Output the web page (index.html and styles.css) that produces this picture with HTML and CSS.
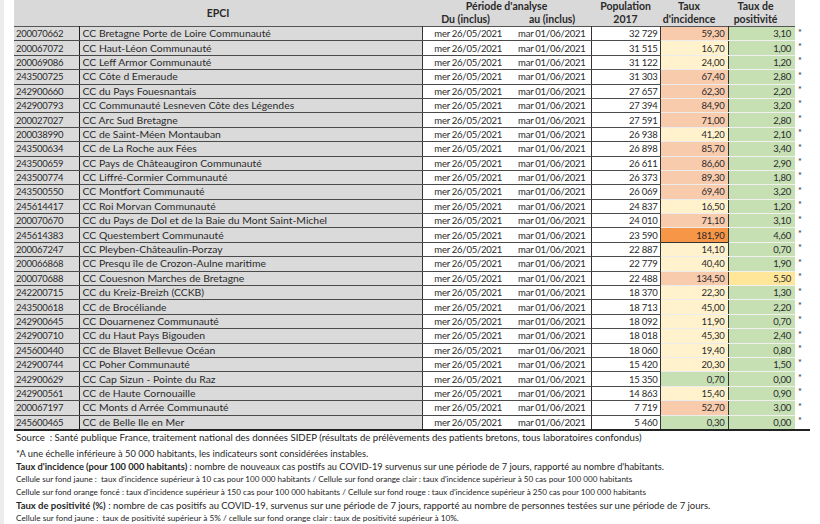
FILE: index.html
```html
<!DOCTYPE html>
<html lang="fr">
<head>
<meta charset="utf-8">
<title>EPCI - taux d'incidence</title>
<link rel="stylesheet" href="styles.css">
</head>
<body>
<div class="page">
<table class="grid">
<colgroup>
<col class="c-id"><col class="c-name"><col class="c-du"><col class="c-au"><col class="c-pop"><col class="c-inc"><col class="c-pos"><col class="c-star">
</colgroup>
<thead>
<tr class="h1">
<th colspan="2" rowspan="2" class="h-epci">EPCI</th>
<th colspan="2" class="h-per">Période d'analyse</th>
<th rowspan="2" class="h-two">Population<br>2017</th>
<th rowspan="2" class="h-two h-inc">Taux<br>d'incidence</th>
<th rowspan="2" class="h-two h-pos">Taux de<br>positivité</th>
<th rowspan="2" class="h-star"></th>
</tr>
<tr class="h2">
<th class="h-du">Du (inclus)</th>
<th class="h-au">au (inclus)</th>
</tr>
</thead>
<tbody>
<tr class="first"><td class="id">200070662</td><td class="nm">CC Bretagne Porte de Loire Communauté</td><td class="du">mer 26/05/2021</td><td class="au">mar 01/06/2021</td><td class="pop">32 729</td><td class="inc o">59,30</td><td class="pos g">3,10</td><td class="st">*</td></tr>
<tr><td class="id">200067072</td><td class="nm">CC Haut-Léon Communauté</td><td class="du">mer 26/05/2021</td><td class="au">mar 01/06/2021</td><td class="pop">31 515</td><td class="inc y">16,70</td><td class="pos g">1,00</td><td class="st">*</td></tr>
<tr><td class="id">200069086</td><td class="nm">CC Leff Armor Communauté</td><td class="du">mer 26/05/2021</td><td class="au">mar 01/06/2021</td><td class="pop">31 122</td><td class="inc y">24,00</td><td class="pos g">1,20</td><td class="st">*</td></tr>
<tr><td class="id">243500725</td><td class="nm">CC Côte d Emeraude</td><td class="du">mer 26/05/2021</td><td class="au">mar 01/06/2021</td><td class="pop">31 303</td><td class="inc o">67,40</td><td class="pos g">2,80</td><td class="st">*</td></tr>
<tr><td class="id">242900660</td><td class="nm">CC du Pays Fouesnantais</td><td class="du">mer 26/05/2021</td><td class="au">mar 01/06/2021</td><td class="pop">27 657</td><td class="inc o">62,30</td><td class="pos g">2,20</td><td class="st">*</td></tr>
<tr><td class="id">242900793</td><td class="nm">CC Communauté Lesneven Côte des Légendes</td><td class="du">mer 26/05/2021</td><td class="au">mar 01/06/2021</td><td class="pop">27 394</td><td class="inc o">84,90</td><td class="pos g">3,20</td><td class="st">*</td></tr>
<tr><td class="id">200027027</td><td class="nm">CC Arc Sud Bretagne</td><td class="du">mer 26/05/2021</td><td class="au">mar 01/06/2021</td><td class="pop">27 591</td><td class="inc o">71,00</td><td class="pos g">2,80</td><td class="st">*</td></tr>
<tr><td class="id">200038990</td><td class="nm">CC de Saint-Méen Montauban</td><td class="du">mer 26/05/2021</td><td class="au">mar 01/06/2021</td><td class="pop">26 938</td><td class="inc y">41,20</td><td class="pos g">2,10</td><td class="st">*</td></tr>
<tr><td class="id">243500634</td><td class="nm">CC de La Roche aux Fées</td><td class="du">mer 26/05/2021</td><td class="au">mar 01/06/2021</td><td class="pop">26 898</td><td class="inc o">85,70</td><td class="pos g">3,40</td><td class="st">*</td></tr>
<tr><td class="id">243500659</td><td class="nm">CC Pays de Châteaugiron Communauté</td><td class="du">mer 26/05/2021</td><td class="au">mar 01/06/2021</td><td class="pop">26 611</td><td class="inc o">86,60</td><td class="pos g">2,90</td><td class="st">*</td></tr>
<tr><td class="id">243500774</td><td class="nm">CC Liffré-Cormier Communauté</td><td class="du">mer 26/05/2021</td><td class="au">mar 01/06/2021</td><td class="pop">26 373</td><td class="inc o">89,30</td><td class="pos g">1,80</td><td class="st">*</td></tr>
<tr><td class="id">243500550</td><td class="nm">CC Montfort Communauté</td><td class="du">mer 26/05/2021</td><td class="au">mar 01/06/2021</td><td class="pop">26 069</td><td class="inc o">69,40</td><td class="pos g">3,20</td><td class="st">*</td></tr>
<tr><td class="id">245614417</td><td class="nm">CC Roi Morvan Communauté</td><td class="du">mer 26/05/2021</td><td class="au">mar 01/06/2021</td><td class="pop">24 837</td><td class="inc y">16,50</td><td class="pos g">1,20</td><td class="st">*</td></tr>
<tr><td class="id">200070670</td><td class="nm">CC du Pays de Dol et de la Baie du Mont Saint-Michel</td><td class="du">mer 26/05/2021</td><td class="au">mar 01/06/2021</td><td class="pop">24 010</td><td class="inc o">71,10</td><td class="pos g">3,10</td><td class="st">*</td></tr>
<tr><td class="id">245614383</td><td class="nm">CC Questembert Communauté</td><td class="du">mer 26/05/2021</td><td class="au">mar 01/06/2021</td><td class="pop">23 590</td><td class="inc r">181,90</td><td class="pos g">4,60</td><td class="st">*</td></tr>
<tr><td class="id">200067247</td><td class="nm">CC Pleyben-Châteaulin-Porzay</td><td class="du">mer 26/05/2021</td><td class="au">mar 01/06/2021</td><td class="pop">22 887</td><td class="inc y">14,10</td><td class="pos g">0,70</td><td class="st">*</td></tr>
<tr><td class="id">200066868</td><td class="nm">CC Presqu île de Crozon-Aulne maritime</td><td class="du">mer 26/05/2021</td><td class="au">mar 01/06/2021</td><td class="pop">22 779</td><td class="inc y">40,40</td><td class="pos g">1,90</td><td class="st">*</td></tr>
<tr><td class="id">200070688</td><td class="nm">CC Couesnon Marches de Bretagne</td><td class="du">mer 26/05/2021</td><td class="au">mar 01/06/2021</td><td class="pop">22 488</td><td class="inc o">134,50</td><td class="pos y">5,50</td><td class="st">*</td></tr>
<tr><td class="id">242200715</td><td class="nm">CC du Kreiz-Breizh (CCKB)</td><td class="du">mer 26/05/2021</td><td class="au">mar 01/06/2021</td><td class="pop">18 370</td><td class="inc y">22,30</td><td class="pos g">1,30</td><td class="st">*</td></tr>
<tr><td class="id">243500618</td><td class="nm">CC de Brocéliande</td><td class="du">mer 26/05/2021</td><td class="au">mar 01/06/2021</td><td class="pop">18 713</td><td class="inc y">45,00</td><td class="pos g">2,20</td><td class="st">*</td></tr>
<tr><td class="id">242900645</td><td class="nm">CC Douarnenez Communauté</td><td class="du">mer 26/05/2021</td><td class="au">mar 01/06/2021</td><td class="pop">18 092</td><td class="inc y">11,90</td><td class="pos g">0,70</td><td class="st">*</td></tr>
<tr><td class="id">242900710</td><td class="nm">CC du Haut Pays Bigouden</td><td class="du">mer 26/05/2021</td><td class="au">mar 01/06/2021</td><td class="pop">18 018</td><td class="inc y">45,30</td><td class="pos g">2,40</td><td class="st">*</td></tr>
<tr><td class="id">245600440</td><td class="nm">CC de Blavet Bellevue Océan</td><td class="du">mer 26/05/2021</td><td class="au">mar 01/06/2021</td><td class="pop">18 060</td><td class="inc y">19,40</td><td class="pos g">0,80</td><td class="st">*</td></tr>
<tr><td class="id">242900744</td><td class="nm">CC Poher Communauté</td><td class="du">mer 26/05/2021</td><td class="au">mar 01/06/2021</td><td class="pop">15 420</td><td class="inc y">20,30</td><td class="pos g">1,50</td><td class="st">*</td></tr>
<tr><td class="id">242900629</td><td class="nm">CC Cap Sizun - Pointe du Raz</td><td class="du">mer 26/05/2021</td><td class="au">mar 01/06/2021</td><td class="pop">15 350</td><td class="inc g">0,70</td><td class="pos g">0,00</td><td class="st">*</td></tr>
<tr><td class="id">242900561</td><td class="nm">CC de Haute Cornouaille</td><td class="du">mer 26/05/2021</td><td class="au">mar 01/06/2021</td><td class="pop">14 863</td><td class="inc y">15,40</td><td class="pos g">0,90</td><td class="st">*</td></tr>
<tr><td class="id">200067197</td><td class="nm">CC Monts d Arrée Communauté</td><td class="du">mer 26/05/2021</td><td class="au">mar 01/06/2021</td><td class="pop">7 719</td><td class="inc o">52,70</td><td class="pos g">3,00</td><td class="st">*</td></tr>
<tr class="last"><td class="id">245600465</td><td class="nm">CC de Belle Ile en Mer</td><td class="du">mer 26/05/2021</td><td class="au">mar 01/06/2021</td><td class="pop">5 460</td><td class="inc g">0,30</td><td class="pos g">0,00</td><td class="st">*</td></tr>
</tbody>
</table>
<div class="notes">
<p class="src">Source &nbsp;: Santé publique France, traitement national des données SIDEP (résultats de prélèvements des patients bretons, tous laboratoires confondus)</p>
<p class="ast">*A une échelle inférieure à 50 000 habitants, les indicateurs sont considérées instables.</p>
<p class="def d1"><b>Taux d'incidence (pour 100 000 habitants)</b> : nombre de nouveaux cas postifs au COVID-19 survenus sur une période de 7 jours, rapporté au nombre d'habitants.</p>
<p class="small">Cellule sur fond jaune : &nbsp;taux d'incidence supérieur à 10 cas pour 100 000 habitants / Cellule sur fond orange clair : taux d'incidence supérieur à 50 cas pour 100 000 habitants</p>
<p class="small">Cellule sur fond orange foncé : taux d'incidence supérieur à 150 cas pour 100 000 habitants / Cellule sur fond rouge : taux d'incidence supérieur à 250 cas pour 100 000 habitants</p>
<p class="def d2"><b>Taux de positivité (%)</b> : nombre de cas positifs au COVID-19, survenus sur une période de 7 jours, rapporté au nombre de personnes testées sur une période de 7 jours.</p>
<p class="small s3">Cellule sur fond jaune : &nbsp;taux de positivité supérieur à 5% / cellule sur fond orange clair : taux de positivité supérieur à 10%.</p>
</div>
</div>
</body>
</html>
```
FILE: styles.css
```css
html, body {
  margin: 0;
  padding: 0;
  background: #ffffff;
}
body {
  font-family: Lato, "Open Sans", "Liberation Sans", sans-serif;
  color: #2a2a2a;
}
.page {
  width: 816px;
  height: 524px;
  border-left: 4px solid #ececec;
  padding-left: 10px;
  box-sizing: border-box;
  overflow: hidden;
}
.grid {
  border-collapse: collapse;
  table-layout: fixed;
  width: 796px;
  font-size: 10.4px;
}
.c-id { width: 65px; }
.c-name { width: 343px; }
.c-du { width: 85px; }
.c-au { width: 84px; }
.c-pop { width: 69px; }
.c-inc { width: 68px; }
.c-pos { width: 67px; }
.c-star { width: 15px; }

thead th {
  background: #d9d9d9;
  font-weight: 700;
  font-size: 10.5px;
  line-height: 13px;
  padding: 0;
  text-align: center;
  vertical-align: middle;
  color: #2a2a2a;
}
.h1 { height: 13px; }
.h2 { height: 12px; }
.h-per { vertical-align: bottom; }
.h-du, .h-au { vertical-align: top; }
.h-du { text-align: center; padding-left: 2px; }
.h-au { text-align: center; padding-left: 6px; }
.h-inc { padding-right: 10px; }
.h-pos { padding-right: 12px; }
th.h-star { background: transparent; }

tbody tr { height: 14.4px; }
tbody td {
  padding: 0 3px;
  line-height: 13px;
  white-space: nowrap;
  overflow: hidden;
  border-bottom: 1px solid #4a4a4a;
}
tr.first td { border-top: 1px solid #555; }
tr.first td.st { border-top: none; }
.id, .du, .au, .pop, .inc, .pos {
  font-size: 9.5px;
  letter-spacing: -0.25px;
}
.id, .nm { background: #dadada; }
.id { border-right: 1px solid #1e1e1e; padding-left: 2px; }
.nm { border-right: 1px solid #333; padding-left: 3px; }
.du, .au { background: #fff; text-align: right; }
.du { padding-right: 5px; }
.au { padding-right: 5px; border-right: 1px solid #333; }
.pop { text-align: right; background: #fff; padding-right: 2px; border-right: 1px solid #333; }
.inc { text-align: right; padding-right: 3px; border-right: 1px solid #333; border-bottom-color: #ececec; }
.pos { text-align: right; padding-right: 4px; border-bottom-color: #f0f0f0; }
.st { border-bottom: none; font-size: 9px; text-align: left; padding-left: 3px; vertical-align: top; line-height: 11px; }

.o { background: #f8cbad; }
.y { background: #fff2cc; }
.r { background: #f79646; border-top: 1px solid #333; border-bottom-color: #333; }
.g { background: #c6e0b4; }
.pos.y { background: #ffe699; }

tr.last td { border-bottom: 2px solid #222; }

.notes {
  padding-left: 2px;
  color: #262626;
}
.notes p {
  margin: 0;
  white-space: nowrap;
}
.src { font-size: 9.6px; line-height: 12px; margin-top: 1px !important; }
.ast { font-size: 9.3px; line-height: 12px; margin-top: 4px !important; }
.def { line-height: 13px; }
.d1 { font-size: 9.25px; }
.d2 { font-size: 9.5px; }
.small { font-size: 8.1px; line-height: 13px; }
.s3 { font-size: 8.25px; }
```
